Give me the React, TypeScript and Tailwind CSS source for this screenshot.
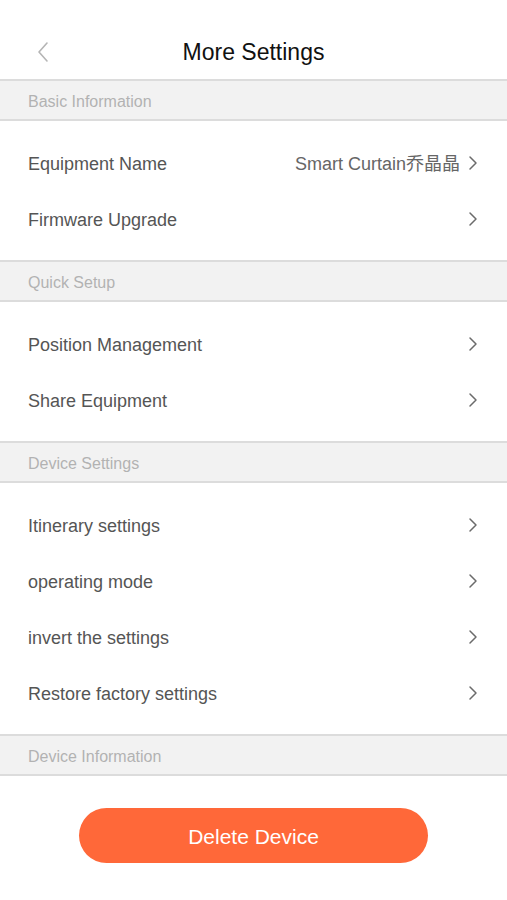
const FONT = "font-['Liberation_Sans','Noto_Sans_CJK_SC',sans-serif]"

function Chevron() {
  return (
    <svg width="10" height="16" viewBox="0 0 10 16" fill="none" className="shrink-0">
      <path d="M2 2l6 6-6 6" stroke="#6b6b6b" strokeWidth="1.5" strokeLinecap="round" strokeLinejoin="round" />
    </svg>
  )
}

function SectionHeader({ title }: { title: string }) {
  return (
    <div className="h-[42px] bg-[#f2f2f2] border-t-2 border-b-2 border-[#dcdcdc] flex items-center px-[28px]">
      <span className="text-[16px] text-[#b2b2b2] pt-[3px]">{title}</span>
    </div>
  )
}

function Row({ label, value }: { label: string; value?: string }) {
  return (
    <div className="h-[56px] flex items-center pl-[28px] pr-[29px]">
      <span className="text-[18px] text-[#555555] flex-1 pt-[3px]">{label}</span>
      {value && <span className="text-[18px] text-[#666666] mr-[8px] pt-[3px]">{value}</span>}
      <Chevron />
    </div>
  )
}

const sections = [
  { title: 'Basic Information', rows: [{ l: 'Equipment Name', v: 'Smart Curtain乔晶晶' }, { l: 'Firmware Upgrade' }] },
  { title: 'Quick Setup', rows: [{ l: 'Position Management' }, { l: 'Share Equipment' }] },
  {
    title: 'Device Settings',
    rows: [
      { l: 'Itinerary settings' },
      { l: 'operating mode' },
      { l: 'invert the settings' },
      { l: 'Restore factory settings' },
    ],
  },
]

export default function App() {
  return (
    <div className={`w-[507px] h-[900px] bg-white ${FONT}`}>
      <div className="h-[79px] pt-[26px]">
        <div className="h-[52px] flex items-center relative px-[36px]">
          <svg width="14" height="22" viewBox="0 0 14 22" fill="none">
            <path d="M11 2L3 11l8 9" stroke="#b5b5b5" strokeWidth="1.6" strokeLinecap="round" strokeLinejoin="round" />
          </svg>
          <span className="absolute left-0 right-0 text-center text-[23px] text-[#111111] pointer-events-none">More Settings</span>
        </div>
      </div>

      {sections.map(s => (
        <div key={s.title}>
          <SectionHeader title={s.title} />
          <div className="pt-[14px] pb-[13px]">
            {s.rows.map(r => (
              <Row key={r.l} label={r.l} value={r.v} />
            ))}
          </div>
        </div>
      ))}

      <SectionHeader title="Device Information" />

      <div className="flex justify-center pt-[32px]">
        <button className="w-[349px] h-[55px] rounded-full bg-[#ff6839] text-white text-[21px] pt-[2px]">Delete Device</button>
      </div>
    </div>
  )
}
